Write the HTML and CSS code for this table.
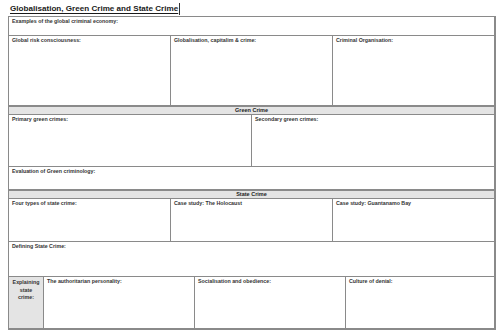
FILE: index.html
```html
<!DOCTYPE html>
<html>
<head>
<meta charset="utf-8">
<link rel="stylesheet" href="styles.css">
</head>
<body>
<div class="page">
  <div class="title"><span class="title-text">Globalisation, Green Crime and State Crime</span><span class="caret"></span></div>
  <div class="sheet">
    <div class="row r-examples"><div class="cell">Examples of the global criminal economy:</div></div>
    <div class="row r-global">
      <div class="cell">Global risk consciousness:</div>
      <div class="cell">Globalisation, capitalim &amp; crime:</div>
      <div class="cell">Criminal Organisation:</div>
    </div>
    <div class="row head">Green Crime</div>
    <div class="row r-primary">
      <div class="cell">Primary green crimes:</div>
      <div class="cell">Secondary green crimes:</div>
    </div>
    <div class="row r-eval"><div class="cell">Evaluation of Green criminology:</div></div>
    <div class="row head">State Crime</div>
    <div class="row r-types">
      <div class="cell">Four types of state crime:</div>
      <div class="cell">Case study: The Holocaust</div>
      <div class="cell">Case study: Guantanamo Bay</div>
    </div>
    <div class="row r-define"><div class="cell">Defining State Crime:</div></div>
    <div class="row r-explain">
      <div class="cell side">Explaining state crime:</div>
      <div class="cell">The authoritarian personality:</div>
      <div class="cell">Socialisation and obedience:</div>
      <div class="cell">Culture of denial:</div>
    </div>
  </div>
</div>
</body>
</html>
```

FILE: styles.css
```css
* { box-sizing: border-box; }
html, body { margin: 0; padding: 0; background: #fff; }
body {
  font-family: "Liberation Sans", Arial, sans-serif;
  color: #222;
  width: 500px;
  height: 335px;
  overflow: hidden;
}
.page { padding: 3px 4px 0 8px; }
.title {
  height: 13px;
  display: flex;
  align-items: flex-start;
  padding-left: 2px;
}
.title-text {
  font-weight: 700;
  font-size: 8.1px;
  line-height: 12px;
  text-decoration: underline;
  text-decoration-thickness: 1px;
  text-underline-offset: 1.5px;
  color: #1a1a1a;
}
.caret {
  width: 1px;
  height: 12px;
  background: #333;
  margin-left: 1px;
}
.sheet {
  width: 488px;
  border: 1px solid #8a8a8a;
  border-bottom-width: 2px;
  border-right-width: 2px;
}
.row {
  display: flex;
  border-bottom: 1px solid #8a8a8a;
}
.row:last-child { border-bottom: none; }
.cell {
  flex: 1 1 0;
  min-width: 0;
  font-size: 5.3px;
  font-weight: 700;
  line-height: 7px;
  padding: 1px 3px;
  color: #333;
  border-right: 1px solid #8a8a8a;
  white-space: nowrap;
}
.cell:last-child { border-right: none; }
.head {
  height: 9px;
  background: #e4e4e4;
  justify-content: center;
  align-items: center;
  font-size: 5.5px;
  font-weight: 700;
  line-height: 7px;
  color: #222;
  border-top: 1px solid #8a8a8a;
}
.r-examples { height: 19px; }
.r-global { height: 70px; }
.r-primary { height: 52px; }
.r-eval { height: 23px; }
.r-types { height: 43px; }
.r-define { height: 35px; }
.r-explain { height: 51px; }
.r-explain .cell { flex: 0 0 151px; }
.r-explain .cell:last-child { flex: 1 1 0; }
.r-explain .side {
  flex: 0 0 35px;
  background: #e4e4e4;
  white-space: normal;
  text-align: center;
  padding: 2px 3px;
  line-height: 7.5px;
  overflow-wrap: normal;
}
.side-word { display: block; }
```
